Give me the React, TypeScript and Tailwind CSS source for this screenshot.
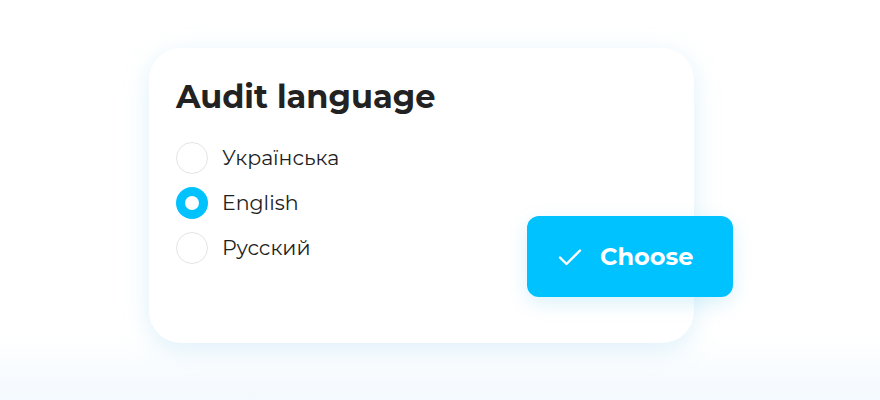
import React, { useState } from 'react';

const options = ['Українська', 'English', 'Русский'];

export default function App() {
  const [selected, setSelected] = useState('English');

  return (
    <div
      className="h-[400px] w-[880px] overflow-hidden bg-[linear-gradient(to_bottom,#ffffff_0%,#ffffff_84%,#f3f9fe_100%)] pt-[48px] pl-[149px]"
      style={{ fontFamily: '"Montserrat", "Inter", "Noto Sans", sans-serif' }}
    >
      <div className="relative h-[295px] w-[545px] rounded-[32px] bg-white pl-[27px] pt-[29px] shadow-[0_6px_24px_rgba(160,215,240,0.35)]">
        <h1 className="text-[32px] font-bold leading-[40px] text-[#222222]">Audit language</h1>

        <div className="mt-[25px] flex flex-col gap-[13px]">
          {options.map(opt => {
            const active = opt === selected;
            return (
              <button
                key={opt}
                onClick={() => setSelected(opt)}
                className="flex h-[32px] items-center gap-[14px] text-left"
              >
                {active ? (
                  <span className="flex h-[32px] w-[32px] items-center justify-center rounded-full bg-[#00c2ff]">
                    <span className="h-[14px] w-[14px] rounded-full bg-white" />
                  </span>
                ) : (
                  <span className="h-[32px] w-[32px] rounded-full border-[1.5px] border-[#e4e4e4] bg-white" />
                )}
                <span className="text-[20.5px] leading-none text-[#1e1e1e]">{opt}</span>
              </button>
            );
          })}
        </div>

        <button className="absolute left-[378px] top-[168px] flex h-[81px] w-[206px] items-center gap-[18px] rounded-[12px] bg-[#00c2ff] pl-[31px] text-white shadow-[0_6px_20px_rgba(0,160,220,0.15)]">
          <svg width="24" height="24" viewBox="0 0 24 24" fill="none" stroke="white" strokeWidth="2.4" strokeLinecap="round" strokeLinejoin="round">
            <path d="M2 12.5l6.5 6.5L22 5.5" />
          </svg>
          <span className="text-[24px] font-bold leading-none">Choose</span>
        </button>
      </div>
    </div>
  );
}
